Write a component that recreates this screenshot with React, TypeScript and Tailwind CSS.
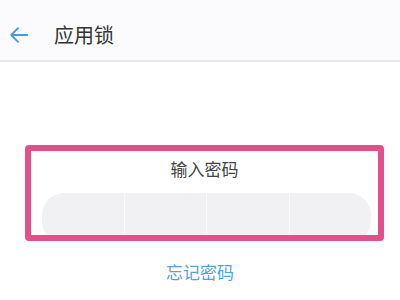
export default function App() {
  return (
    <div
      className="h-[300px] w-[400px] overflow-hidden bg-white"
      style={{ fontFamily: '"Noto Sans CJK SC", "Noto Sans", sans-serif' }}
    >
      <header className="flex h-[62px] items-center border-b-2 border-[#e9e9ec] bg-[#fbfbfd] pt-[10px]">
        <svg className="ml-[8px] h-[22px] w-[22px]" viewBox="0 0 24 24" fill="none" stroke="#4a9ad6" strokeWidth="2" strokeLinecap="round" strokeLinejoin="round">
          <path d="M21 12H3.5M11 4.5L3.5 12l7.5 7.5" />
        </svg>
        <h1 className="ml-[24px] text-[20px] text-[#333]">应用锁</h1>
      </header>
      <div className="ml-[25px] mt-[83px] h-[96px] w-[359px] overflow-hidden rounded-[4px] border-[6px] border-[#e0508a] bg-white">
        <div className="pt-[5px] text-center text-[17px] leading-[26px] text-[#444]">输入密码</div>
        <div className="ml-[11px] mr-[7px] mt-[11px] flex h-[50px] overflow-hidden rounded-[22px] bg-[#f1f1f3]">
          <div className="flex-1 border-r border-[#fafafa]" />
          <div className="flex-1 border-r border-[#fafafa]" />
          <div className="flex-1 border-r border-[#fafafa]" />
          <div className="flex-1" />
        </div>
      </div>
      <div className="mt-[19px] text-center text-[17px] leading-[24px] text-[#5b9fd3]">忘记密码</div>
    </div>
  );
}
